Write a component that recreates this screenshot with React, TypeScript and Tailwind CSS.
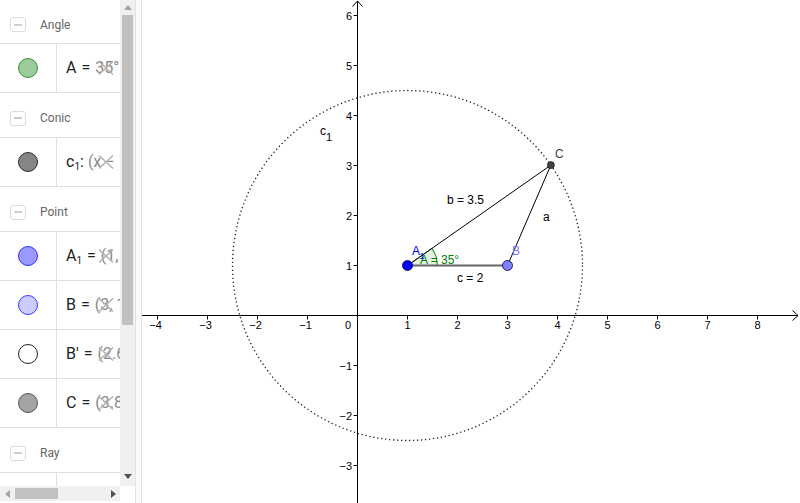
import React from 'react'

const X0 = 357.5
const Y0 = 315.5
const U = 50
const px = (x: number) => X0 + U * x
const py = (y: number) => Y0 - U * y

const Cross = () => (
  <svg
    className="absolute left-[97px] top-1/2 -translate-y-1/2"
    width="18"
    height="17"
    viewBox="0 0 18 17"
  >
    <path d="M2 2 L16 15 M16 2 L2 15" stroke="#b4b4b4" strokeWidth="1.6" fill="none" />
  </svg>
)

const GroupHeader = ({ label, first }: { label: string; first?: boolean }) => (
  <div
    className={`flex ${first ? 'h-[44px]' : 'h-[45px]'} items-center gap-[14px] border-b border-[#e0e0e0] pl-[10px] pt-[6px]`}
  >
    <span className="flex h-[15px] w-[16px] items-center justify-center rounded-[3px] border border-[#dcdcdc] bg-white">
      <span className="h-[2px] w-[8px] bg-[#cccccc]" />
    </span>
    <span className="text-[12px] text-[#666666]">{label}</span>
  </div>
)

const ItemRow = ({
  dot,
  name,
  value,
  sep = '=',
}: {
  dot: string
  name: React.ReactNode
  value: string
  sep?: string
}) => (
  <div className="relative flex h-[49px] border-b border-[#e0e0e0]">
    <div className="flex w-[57px] shrink-0 items-center justify-center border-r border-[#e0e0e0]">
      {dot && <span className={`h-[20px] w-[20px] rounded-full border ${dot}`} />}
    </div>
    {value && (
      <>
        <div className="flex items-center whitespace-nowrap pl-[9px] text-[16px] text-[#222222]">
          <span>{name}</span>
          {sep === '=' ? (
            <span className="px-[5px]">=</span>
          ) : (
            <span className="pr-[4px]">{sep}</span>
          )}
          <span className="text-[#8a8a8a]">{value}</span>
        </div>
        <Cross />
      </>
    )}
  </div>
)

const Sub = ({ base, sub }: { base: string; sub: string }) => (
  <span>
    {base}
    <sub className="text-[10px]">{sub}</sub>
  </span>
)

const Tri = ({ dir, color }: { dir: 'up' | 'down' | 'left' | 'right'; color: string }) => {
  const d = {
    up: 'M0 5 L4 0 L8 5 Z',
    down: 'M0 0 L8 0 L4 5 Z',
    left: 'M5 0 L5 8 L0 4 Z',
    right: 'M0 0 L5 4 L0 8 Z',
  }[dir]
  const horiz = dir === 'left' || dir === 'right'
  return (
    <svg width={horiz ? 5 : 8} height={horiz ? 8 : 5} viewBox={horiz ? '0 0 5 8' : '0 0 8 5'}>
      <path d={d} fill={color} />
    </svg>
  )
}

const AlgebraView = () => (
  <div className="flex w-[135px] shrink-0 flex-col">
    <div className="flex h-[486px]">
      <div className="w-[120px] overflow-hidden bg-white">
        <GroupHeader label="Angle" first />
        <ItemRow dot="bg-[#9ccb9c] border-[#3a8d3a]" name="A" value="35°" />
        <GroupHeader label="Conic" />
        <ItemRow
          dot="bg-[#858585] border-[#2e2e2e]"
          name={<Sub base="c" sub="1" />}
          sep=":"
          value="(x − 1)² + (y − 1)² = 12.25"
        />
        <GroupHeader label="Point" />
        <ItemRow dot="bg-[#9999ff] border-[#2f2fff]" name={<Sub base="A" sub="1" />} value="(1, 1)" />
        <ItemRow dot="bg-[#ccccff] border-[#3a3aff]" name="B" value="(3, 1)" />
        <ItemRow dot="bg-white border-[#222222]" name="B'" value="(2.64, 1)" />
        <ItemRow dot="bg-[#a3a3a3] border-[#555555]" name="C" value="(3.87, 3.01)" />
        <GroupHeader label="Ray" />
        <ItemRow dot="" name="" value="" />
      </div>
      <div className="flex w-[15px] flex-col items-center bg-[#f0f0f0]">
        <div className="flex h-[15px] items-center">
          <Tri dir="up" color="#a3a3a3" />
        </div>
        <div className="h-[310px] w-[11px] bg-[#c1c1c1]" />
        <div className="flex-1" />
        <div className="flex h-[18px] items-center pb-[2px]">
          <Tri dir="down" color="#505050" />
        </div>
      </div>
    </div>
    <div className="flex h-[15px]">
      <div className="flex w-[120px] items-center bg-[#f0f0f0]">
        <div className="flex w-[15px] justify-center">
          <Tri dir="left" color="#a3a3a3" />
        </div>
        <div className="h-[11px] w-[43px] bg-[#c1c1c1]" />
        <div className="flex-1" />
        <div className="flex w-[14px] justify-center">
          <Tri dir="right" color="#505050" />
        </div>
      </div>
      <div className="w-[15px] bg-white" />
    </div>
  </div>
)

const Graphics = () => {
  const xs = [-4, -3, -2, -1, 1, 2, 3, 4, 5, 6, 7, 8]
  const ys = [-3, -2, -1, 1, 2, 3, 4, 5, 6]
  const A = { x: px(1), y: py(1) }
  const B = { x: px(3), y: py(1) }
  const ang = (35 * Math.PI) / 180
  const C = { x: px(1 + 3.5 * Math.cos(ang)), y: py(1 + 3.5 * Math.sin(ang)) }
  const r = 30
  const arcEnd = { x: A.x + r * Math.cos(ang), y: A.y - r * Math.sin(ang) }
  const label = (n: number) => (n < 0 ? `−${-n}` : `${n}`)

  return (
    <svg
      width="658"
      height="503"
      viewBox="142 0 658 503"
      className="block"
      fontFamily="'Liberation Sans', Arial, sans-serif"
    >
      <rect x="142" y="0" width="658" height="503" fill="white" />
      {/* axes */}
      <line x1="142" y1={Y0} x2="798" y2={Y0} stroke="#000" strokeWidth="1" />
      <path d={`M792.5 310.5 L798 ${Y0} L792.5 320.5`} stroke="#000" fill="none" strokeWidth="1" />
      <line x1={X0} y1="1" x2={X0} y2="503" stroke="#000" strokeWidth="1" />
      <path d={`M352.5 6.5 L${X0} 1 L362.5 6.5`} stroke="#000" fill="none" strokeWidth="1" />
      {xs.map((x) => (
        <g key={`x${x}`}>
          <line x1={px(x)} y1={Y0} x2={px(x)} y2={Y0 + 4} stroke="#000" />
          <text x={px(x) - (x < 0 ? 2 : 0)} y="329" fontSize="11" textAnchor="middle" fill="#000">
            {label(x)}
          </text>
        </g>
      ))}
      <text x="348" y="329" fontSize="11" textAnchor="middle" fill="#000">
        0
      </text>
      {ys.map((y) => (
        <g key={`y${y}`}>
          <line x1={X0 - 4} y1={py(y)} x2={X0} y2={py(y)} stroke="#000" />
          <text x="352" y={py(y) + 4} fontSize="11" textAnchor="end" fill="#000">
            {label(y)}
          </text>
        </g>
      ))}

      {/* circle c1 */}
      <circle
        cx={A.x}
        cy={A.y}
        r={175}
        fill="none"
        stroke="#222"
        strokeWidth="1.3"
        strokeDasharray="1.3 2.7"
      />
      <text x="320" y="135" fontSize="12" fill="#000">
        c
      </text>
      <text x="326" y="141" fontSize="11" fill="#000">
        1
      </text>

      {/* angle */}
      <path
        d={`M${A.x} ${A.y} L${A.x + r} ${A.y} A${r} ${r} 0 0 0 ${arcEnd.x} ${arcEnd.y} Z`}
        fill="rgba(0,100,0,0.1)"
        stroke="#007f00"
        strokeWidth="1"
      />

      {/* triangle */}
      <line x1={A.x} y1={A.y} x2={B.x} y2={B.y} stroke="#666" strokeWidth="2" />
      <line x1={A.x} y1={A.y} x2={C.x} y2={C.y} stroke="#000" strokeWidth="1" />
      <line x1={B.x} y1={B.y} x2={C.x} y2={C.y} stroke="#000" strokeWidth="1" />

      <text x="447" y="204" fontSize="12" fill="#000">
        b = 3.5
      </text>
      <text x="543" y="221" fontSize="12" fill="#000">
        a
      </text>
      <text x="457" y="282" fontSize="12" fill="#000">
        c = 2
      </text>
      <text x="420" y="264" fontSize="12" fill="#007f00">
        A = 35°
      </text>

      {/* points */}
      <circle cx={A.x} cy={A.y} r="5" fill="#0000ff" stroke="#000040" strokeWidth="0.8" />
      <circle cx={B.x} cy={B.y} r="5" fill="#7f7fff" stroke="#00003f" strokeWidth="0.8" />
      <circle cx={C.x} cy={C.y} r="3.5" fill="#444" stroke="#000" strokeWidth="0.6" />

      <text x="412" y="255" fontSize="12" fill="#0000ff">
        A
      </text>
      <text x="419.5" y="259" fontSize="9" fill="#0000ff">
        1
      </text>
      <text x="512" y="255" fontSize="12" fill="#7f7fff">
        B
      </text>
      <text x="555" y="158" fontSize="12" fill="#444">
        C
      </text>
    </svg>
  )
}

export default function App() {
  return (
    <div className="flex h-[503px] w-[800px] overflow-hidden bg-white font-['Roboto',sans-serif]">
      <AlgebraView />
      <div className="w-[7px] shrink-0 border-x border-[#e2e2e2] bg-[#fbfbfb]" />
      <div className="flex-1 overflow-hidden">
        <Graphics />
      </div>
    </div>
  )
}
